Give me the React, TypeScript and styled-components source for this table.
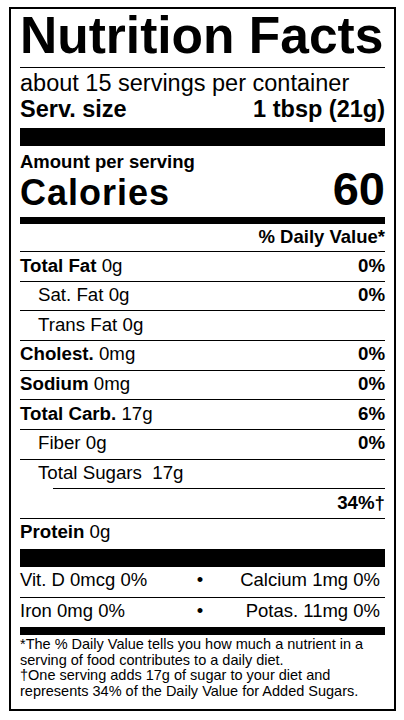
import React from "react";
import styled, { createGlobalStyle } from "styled-components";

const GlobalStyle = createGlobalStyle`
  html,
  body {
    margin: 0;
    padding: 0;
    background: #fff;
  }

  body {
    font-family: "Liberation Sans", Arial, Helvetica, sans-serif;
    color: #000;
  }
`;

interface INutrient {
  name: string;
  amount: string;
  dv?: string;
  sub?: boolean;
}

const nutrients: INutrient[] = [
  { name: "Total Fat", amount: "0g", dv: "0%" },
  { name: "Sat. Fat", amount: "0g", dv: "0%", sub: true },
  { name: "Trans Fat", amount: "0g", sub: true },
  { name: "Cholest.", amount: "0mg", dv: "0%" },
  { name: "Sodium", amount: "0mg", dv: "0%" },
  { name: "Total Carb.", amount: "17g", dv: "6%" },
  { name: "Fiber", amount: "0g", dv: "0%", sub: true },
];

const vitamins = [
  ["Vit. D 0mcg 0%", "Calcium 1mg 0%"],
  ["Iron 0mg 0%", "Potas. 11mg 0%"],
];

const App: React.FC = () => {
  return (
    <>
      <GlobalStyle />
      <Label>
        <Title>Nutrition Facts</Title>

        <Serving>
          <Servings>about 15 servings per container</Servings>
          <ServSize>
            <span>Serv. size</span>
            <span>1 tbsp (21g)</span>
          </ServSize>
        </Serving>

        <CaloriesBlock>
          <Amount>Amount per serving</Amount>
          <CaloriesRow>
            <CaloriesLabel>Calories</CaloriesLabel>
            <CaloriesValue>60</CaloriesValue>
          </CaloriesRow>
        </CaloriesBlock>

        <DailyHead>% Daily Value*</DailyHead>

        {nutrients.map((n) => (
          <Row key={n.name} $sub={n.sub}>
            <span>
              {n.sub ? n.name : <Bold>{n.name}</Bold>} {n.amount}
            </span>
            {n.dv && <Bold>{n.dv}</Bold>}
          </Row>
        ))}

        <Row $sub $rule={0}>
          <span>Total Sugars&nbsp; 17g</span>
        </Row>
        <InsetRule />
        <Row>
          <span />
          <Bold>34%†</Bold>
        </Row>
        <Row $rule={18} $bottom={6.5}>
          <span>
            <Bold>Protein</Bold> 0g
          </span>
        </Row>

        {vitamins.map(([left, right], i) => (
          <VitRow key={left} $rule={i === 0 ? 1 : 8} $bottom={i === 0 ? 6.5 : 5.5}>
            <span>{left}</span>
            <Dot>•</Dot>
            <VitRight>{right}</VitRight>
          </VitRow>
        ))}

        <Footnote>
          <p>
            *The % Daily Value tells you how much a nutrient in a serving of
            food contributes to a daily diet.
          </p>
          <p>
            †One serving adds 17g of sugar to your diet and represents 34% of
            the Daily Value for Added Sugars.
          </p>
        </Footnote>
      </Label>
    </>
  );
};

const Label = styled.section`
  box-sizing: border-box;
  width: 387px;
  margin: 7px 0 0 9px;
  border: 2px solid #000;
  padding: 0 9px;
`;

const Title = styled.h1`
  margin: 0;
  padding: 1px 0 6px;
  font-size: 51.5px;
  line-height: 51px;
  font-weight: 700;
  white-space: nowrap;
  border-bottom: 1px solid #000;
`;

const Serving = styled.div`
  padding: 3px 0 5px;
  border-bottom: 18px solid #000;
`;

const Servings = styled.p`
  margin: 0;
  font-size: 23.5px;
  line-height: 24px;
`;

const ServSize = styled.div`
  display: flex;
  justify-content: space-between;
  font-size: 23.5px;
  line-height: 28px;
  font-weight: 700;
`;

const CaloriesBlock = styled.div`
  padding: 6px 0 9px;
  border-bottom: 7px solid #000;
`;

const Amount = styled.div`
  font-size: 18.5px;
  line-height: 20px;
  font-weight: 700;
`;

const CaloriesRow = styled.div`
  display: flex;
  justify-content: space-between;
  align-items: baseline;
  height: 36px;
  font-weight: 700;
`;

const CaloriesLabel = styled.span`
  font-size: 36px;
  line-height: 34px;
  letter-spacing: 1px;
`;

const CaloriesValue = styled.span`
  font-size: 47px;
  line-height: 34px;
`;

const DailyHead = styled.div`
  padding: 3px 0 4px;
  font-size: 18.5px;
  line-height: 20px;
  font-weight: 700;
  text-align: right;
  border-bottom: 1px solid #000;
`;

const Row = styled.div<{ $sub?: boolean; $rule?: number; $bottom?: number }>`
  display: flex;
  justify-content: space-between;
  align-items: baseline;
  height: 20px;
  padding: 3.5px 0 ${({ $bottom }) => $bottom ?? 5.17}px
    ${({ $sub }) => ($sub ? "18px" : "0")};
  font-size: 18.7px;
  line-height: 20px;
  border-bottom: ${({ $rule }) => $rule ?? 1}px solid #000;
`;

const Bold = styled.b`
  font-weight: 700;
`;

const InsetRule = styled.div`
  margin-left: 33px;
  height: 1px;
  background: #000;
`;

const VitRow = styled.div<{ $rule: number; $bottom: number }>`
  display: grid;
  grid-template-columns: 1fr auto 1fr;
  align-items: baseline;
  height: 20px;
  padding: 3.5px 5px ${({ $bottom }) => $bottom}px 0;
  font-size: 18.5px;
  line-height: 20px;
  border-bottom: ${({ $rule }) => $rule}px solid #000;
`;

const Dot = styled.span`
  padding: 0 4px;
`;

const VitRight = styled.span`
  text-align: right;
`;

const Footnote = styled.div`
  padding: 2px 0 9px;
  font-size: 14.5px;
  line-height: 15.67px;

  p {
    margin: 0;
  }
`;

export default App;
